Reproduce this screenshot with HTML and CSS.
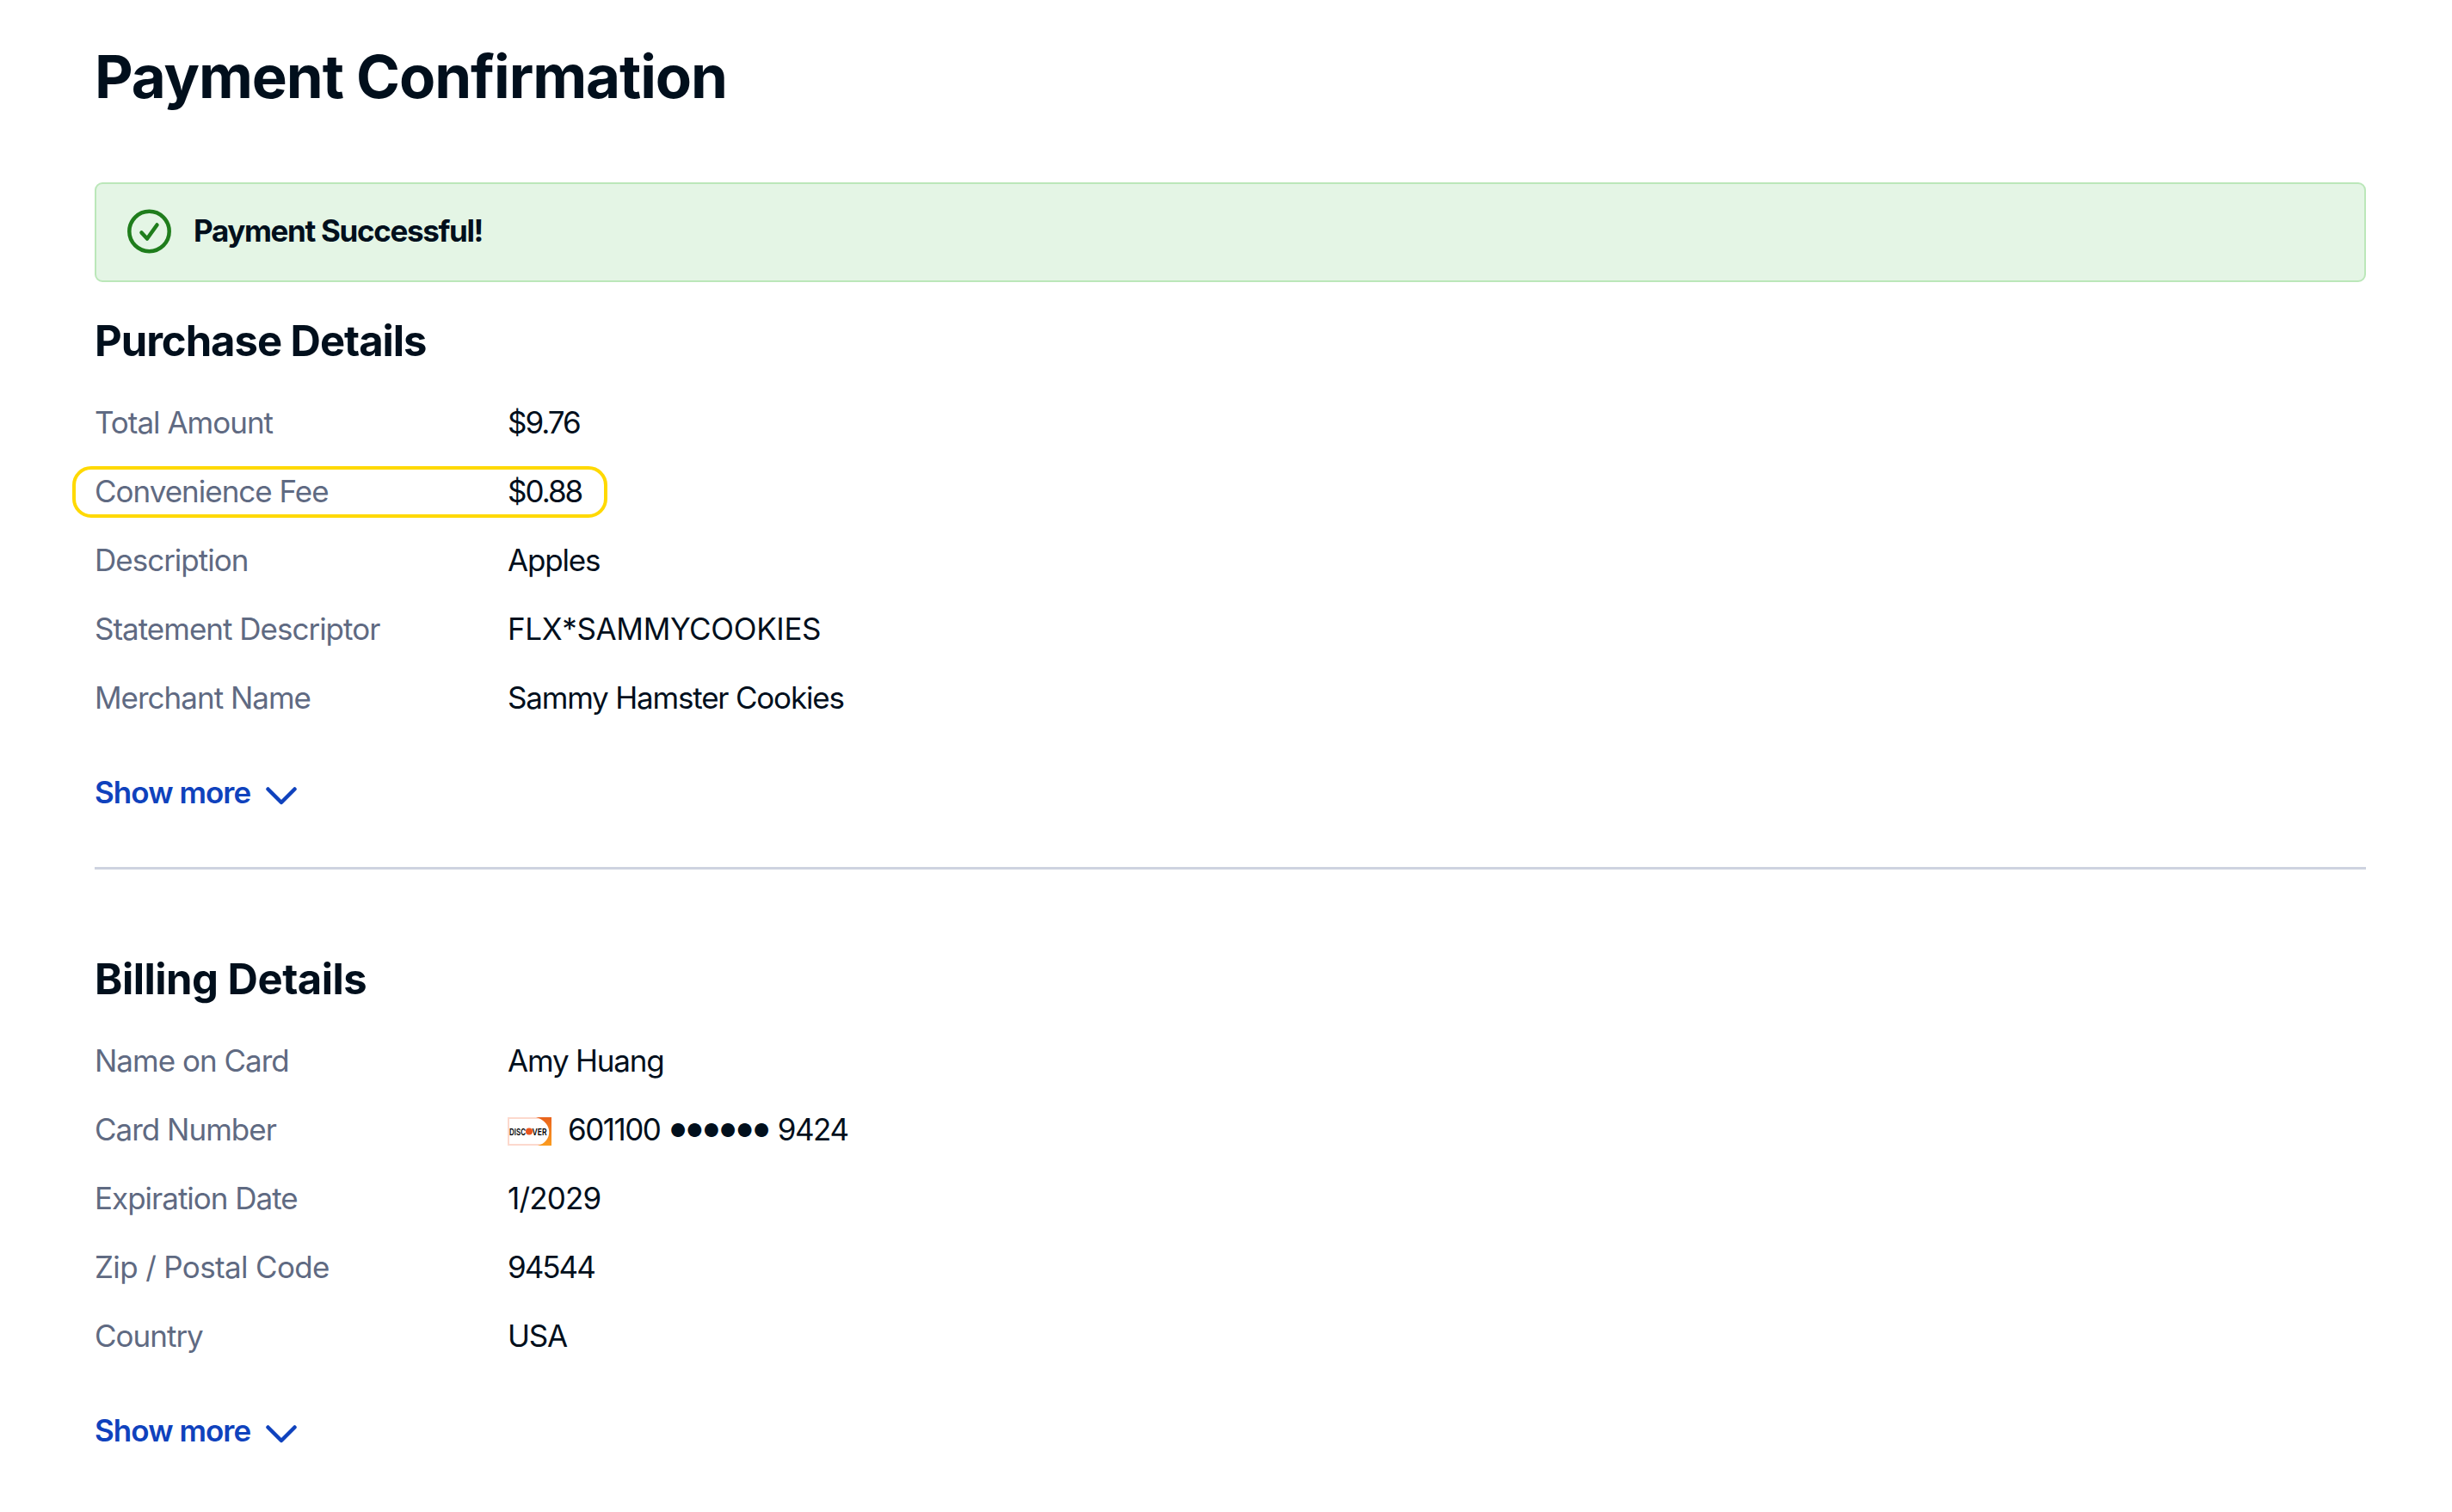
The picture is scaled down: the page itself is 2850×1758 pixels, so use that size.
FILE: index.html
```html
<!DOCTYPE html>
<html lang="en">
<head>
    <meta charset="UTF-8">
    <title>Payment Confirmation</title>
    <link rel="stylesheet" href="styles.css">
</head>
<body>
    <main class="page">
        <h1 class="title">Payment Confirmation</h1>

        <div class="alert">
            <svg class="alert-icon" viewBox="0 0 52 52">
                <circle cx="25.500" cy="26" r="23.200"/>
                <path d="M16.500 27.500l6.500 7L34.500 18.500"/>
            </svg>
            <span class="alert-text">Payment Successful!</span>
        </div>

        <section class="details">
            <h2>Purchase Details</h2>
            <dl>
                <div class="row"><dt>Total Amount</dt><dd class="amount">$9.76</dd></div>
                <div class="row highlight"><dt>Convenience Fee</dt><dd class="amount">$0.88</dd></div>
                <div class="row"><dt>Description</dt><dd>Apples</dd></div>
                <div class="row"><dt>Statement Descriptor</dt><dd class="caps">FLX*SAMMYCOOKIES</dd></div>
                <div class="row"><dt>Merchant Name</dt><dd>Sammy Hamster Cookies</dd></div>
            </dl>
            <a class="more">Show more
                <svg class="chevron" viewBox="0 0 36 22"><path d="M2.500 2.500L18 18L33.500 2.500"/></svg>
            </a>
        </section>

        <hr>

        <section class="details billing">
            <h2>Billing Details</h2>
            <dl>
                <div class="row"><dt>Name on Card</dt><dd>Amy Huang</dd></div>
                <div class="row">
                    <dt>Card Number</dt>
                    <dd class="card">
                        <svg class="card-logo" viewBox="0 0 51 33">
                            <defs>
                                <linearGradient id="corner" x1="0" y1="0" x2="0" y2="1">
                                    <stop offset="0" stop-color="#e9631d"/>
                                    <stop offset="1" stop-color="#fb9d20"/>
                                </linearGradient>
                            </defs>
                            <rect x="1" y="1" width="49" height="31" fill="#fff" stroke="#fcd9cd" stroke-width="2"/>
                            <path d="M33 0H51V33H35C52 29 54 6 33 0Z" fill="url(#corner)"/>
                            <text class="logo-text" x="2" y="20.500" textLength="19" lengthAdjust="spacingAndGlyphs">DISC</text>
                            <circle cx="25" cy="16.500" r="4" fill="#e8561f"/>
                            <text class="logo-text" x="28.500" y="20.500" textLength="17" lengthAdjust="spacingAndGlyphs">VER</text>
                        </svg>
                        <span>601100</span>
                        <span class="dots">●●●●●●</span>
                        <span>9424</span>
                    </dd>
                </div>
                <div class="row"><dt>Expiration Date</dt><dd class="date">1/2029</dd></div>
                <div class="row"><dt class="zip">Zip / Postal Code</dt><dd class="amount">94544</dd></div>
                <div class="row"><dt>Country</dt><dd>USA</dd></div>
            </dl>
            <a class="more">Show more
                <svg class="chevron" viewBox="0 0 36 22"><path d="M2.500 2.500L18 18L33.500 2.500"/></svg>
            </a>
        </section>
    </main>
</body>
</html>
```
FILE: styles.css
```css
:root {
    --text: #010f1c;
    --muted: #5f6a82;
    --link: #0f42bd;
    --green: #1f7d1c;
}
*, *::before {
    box-sizing: border-box;
}
body {
    margin: 0;
    background: #fff;
    color: var(--text);
    font-family: Inter, "Liberation Sans", sans-serif;
    font-size: 35px;
}
.page {
    padding: 40px 100px 0 110px;
}
.title {
    margin: 0 0 74px;
    font-size: 69px;
    line-height: 98px;
    font-weight: 700;
    letter-spacing: -1.1px;
}
.alert {
    display: flex;
    align-items: center;
    gap: 25px;
    height: 116px;
    padding: 0 36px;
    background: #e4f5e5;
    border: 2px solid #bbe7b9;
    border-radius: 9px;
}
.alert-icon {
    width: 52px;
    height: 52px;
    margin-bottom: 2px;
    fill: none;
    stroke: var(--green);
    stroke-width: 4.5;
    stroke-linecap: round;
    stroke-linejoin: round;
}
.alert-text {
    font-weight: 700;
    padding-bottom: 5px;
    letter-spacing: -1.35px;
}
.details {
    padding-top: 39px;
}
h2 {
    margin: 0 0 24px;
    font-size: 49px;
    line-height: 60px;
    letter-spacing: -1.05px;
}
.billing h2 {
    letter-spacing: -.5px;
}
dl {
    margin: 0;
}
.row {
    display: flex;
    align-items: center;
    height: 80px;
}
dt {
    width: 480px;
    color: var(--muted);
    letter-spacing: -1px;
}
.zip {
    letter-spacing: -.65px;
}
dd {
    margin: 0;
    letter-spacing: -1.2px;
}
.amount {
    letter-spacing: -2px;
}
.caps {
    letter-spacing: -.35px;
}
.date {
    letter-spacing: -.8px;
}
.highlight {
    position: relative;
}
.highlight::before {
    content: "";
    position: absolute;
    left: -26px;
    top: 11px;
    width: 622px;
    height: 60px;
    border: 4px solid #ffd900;
    border-radius: 22px;
}
.card {
    display: flex;
    align-items: center;
    letter-spacing: -1.5px;
}
.card-logo {
    width: 51px;
    height: 33px;
    margin: 4px 19px 0 0;
}
.logo-text {
    font-size: 11px;
    font-weight: 600;
    letter-spacing: 0;
}
.dots {
    margin: 3px 9px 0 11px;
    font-size: 21px;
    letter-spacing: .2px;
}
.more {
    display: flex;
    align-items: center;
    gap: 18px;
    height: 60px;
    margin-top: 40px;
    color: var(--link);
    font-weight: 600;
    letter-spacing: -.95px;
}
.chevron {
    width: 36px;
    height: 22px;
    margin-top: 9px;
    fill: none;
    stroke: currentColor;
    stroke-width: 4.5;
    stroke-linecap: round;
    stroke-linejoin: round;
}
hr {
    height: 3px;
    margin: 57px 0 59px;
    border: 0;
    background: #ced3e0;
}
```
